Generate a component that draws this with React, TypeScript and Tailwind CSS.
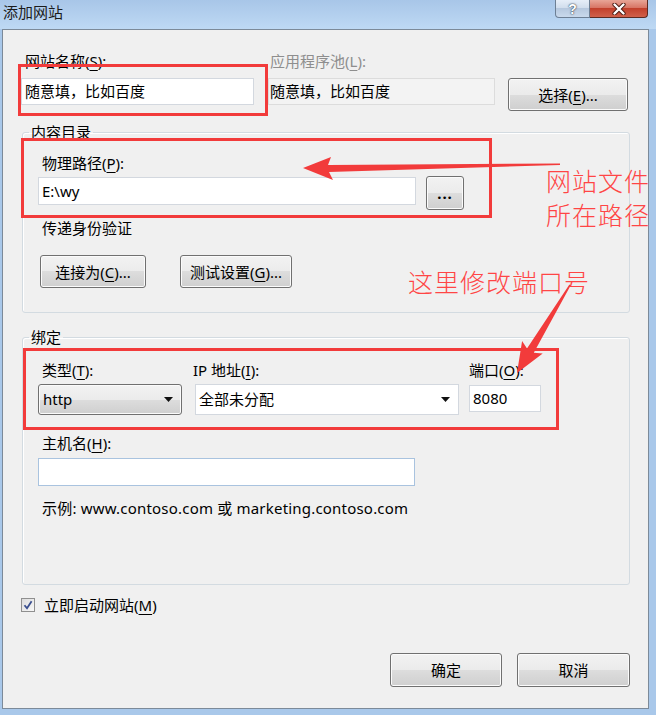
import React from 'react';

// win7 style push button
const btn =
  'flex items-center justify-center h-[33px] rounded-[3px] border border-[#707070] bg-[linear-gradient(to_bottom,#f2f2f2_0%,#ebebeb_50%,#dddddd_50%,#cfcfcf_100%)] shadow-[inset_0_0_0_1px_#fbfbfb] text-[15px] leading-[20px] text-black';

const field = 'h-[27px] border border-[#d3d8df] bg-white text-[15px] leading-[25px] pl-[3px] text-black';

const note =
  "absolute whitespace-nowrap font-light text-[25px] leading-[30px] tracking-[1px] text-[#ff4545] font-['Noto_Sans_CJK_SC',sans-serif]";

function Key({ c }: { c: string }) {
  return <span className="underline underline-offset-[3px] decoration-[1px]">{c}</span>;
}

function Label({ children, className = '' }: { children: React.ReactNode; className?: string }) {
  return <div className={`h-[20px] leading-[20px] text-[15px] whitespace-nowrap ${className}`}>{children}</div>;
}

function Caret() {
  return (
    <svg width="9" height="5" viewBox="0 0 9 5" className="shrink-0">
      <path d="M0 0 H9 L4.5 5 Z" fill="#111" />
    </svg>
  );
}

export default function App() {
  return (
    <div className="relative w-[656px] h-[715px] overflow-hidden bg-[#a9c8ea] font-['Noto_Sans','Noto_Sans_CJK_SC',sans-serif] text-black">
      {/* title bar */}
      <div className="h-[29px] flex items-start bg-[linear-gradient(to_bottom,#a8c6e8,#bed9f4)]">
        <div className="pl-[3px] pt-[2px] text-[15px] leading-[20px] text-[#1b1b1b]">添加网站</div>
        <div className="ml-auto mr-[8px] flex">
          <div className="w-[35px] h-[18px] flex items-center justify-center rounded-bl-[4px] border border-t-0 border-[#6d7f94] bg-[linear-gradient(to_bottom,#e6eef8_0%,#cfdcec_50%,#b6c8de_50%,#c9d9ec_100%)] text-white font-bold text-[14px] leading-[16px] font-['Liberation_Sans',sans-serif] [text-shadow:0_0_2px_#2c3a4a,0_0_1px_#2c3a4a]">
            ?
          </div>
          <div className="w-[58px] h-[18px] flex items-center justify-center rounded-br-[4px] border border-t-0 border-l-0 border-[#5c2a22] bg-[linear-gradient(to_bottom,#e8a597_0%,#d6705f_50%,#c2402c_50%,#d0604a_100%)]">
            <svg width="14" height="12" viewBox="0 0 14 12">
              <path d="M2.5 1.5 L11.5 10.5 M11.5 1.5 L2.5 10.5" stroke="#4a1a12" strokeWidth="4.2" strokeLinecap="round" />
              <path d="M2.5 1.5 L11.5 10.5 M11.5 1.5 L2.5 10.5" stroke="#fff" strokeWidth="2.4" strokeLinecap="round" />
            </svg>
          </div>
        </div>
      </div>

      {/* dialog body */}
      <div className="ml-[2px] w-[647px] h-[680px] border border-[#7c8a99] bg-[#f0f0f0]">
        {/* site name / app pool */}
        <div className="pt-[21px] pl-[18px] flex items-start">
          <div className="w-[233px]">
            <Label className="pl-[4px]">
              网站名称(<Key c="S" />):
            </Label>
            <div className={`${field} mt-[7px]`}>随意填，比如百度</div>
          </div>
          <div className="w-[227px] ml-[14px]">
            <Label className="pl-[2px] text-[#8e8e8e]">
              应用程序池(<Key c="L" />):
            </Label>
            <div className="mt-[7px] h-[27px] border border-[#dcdcdc] bg-[#f3f3f3] text-[15px] leading-[25px] pl-[1px]">
              随意填，比如百度
            </div>
          </div>
          <div className={`${btn} w-[120px] ml-[13px] mt-[27px]`}>
            选择(<Key c="E" />)...
          </div>
        </div>

        {/* content directory */}
        <fieldset className="mt-[11px] ml-[19px] w-[608px] rounded-[3px] border border-[#d3dbe1] shadow-[inset_1px_1px_0_#fff] pl-[15px] pt-[11px] pb-[24px]">
          <legend className="ml-[-9px] px-[2px] h-[20px] leading-[20px] text-[15px]">内容目录</legend>
          <Label className="pl-[4px]">
            物理路径(<Key c="P" />):
          </Label>
          <div className="mt-[3px] flex items-start">
            <div className={`${field} mt-[1px] w-[378px] h-[28px] leading-[26px]`}>E:\wy</div>
            <div className={`${btn} ml-[10px] w-[38px] h-[34px] text-[13px] font-bold tracking-[1px]`}>...</div>
          </div>
          <Label className="pl-[4px] mt-[8px]">传递身份验证</Label>
          <div className="mt-[17px] flex pl-[2px]">
            <div className={`${btn} w-[106px]`}>
              连接为(<Key c="C" />)...
            </div>
            <div className={`${btn} w-[112px] ml-[34px]`}>
              测试设置(<Key c="G" />)...
            </div>
          </div>
        </fieldset>

        {/* binding */}
        <fieldset className="mt-[14px] ml-[19px] w-[608px] rounded-[3px] border border-[#d3dbe1] shadow-[inset_1px_1px_0_#fff] pl-[15px] pt-[13px] pb-[66px]">
          <legend className="ml-[-9px] px-[2px] h-[20px] leading-[20px] text-[15px]">绑定</legend>
          <div className="flex items-start">
            <div className="w-[144px]">
              <Label className="pl-[4px]">
                类型(<Key c="T" />):
              </Label>
              <div className="mt-[4px] h-[31px] rounded-[3px] border border-[#707070] bg-[linear-gradient(to_bottom,#f2f2f2_0%,#ebebeb_50%,#dddddd_50%,#cfcfcf_100%)] shadow-[inset_0_0_0_1px_#fbfbfb] flex items-center pl-[4px] pr-[8px] text-[15px]">
                <span className="flex-1">http</span>
                <Caret />
              </div>
            </div>
            <div className="w-[264px] ml-[13px]">
              <Label className="ml-[-2px]">
                IP 地址(<Key c="I" />):
              </Label>
              <div className="mt-[4px] h-[31px] border border-[#d3d8df] bg-white flex items-center pl-[3px] pr-[8px] text-[15px]">
                <span className="flex-1">全部未分配</span>
                <Caret />
              </div>
            </div>
            <div className="w-[72px] ml-[10px]">
              <Label>
                端口(<Key c="O" />):
              </Label>
              <div className={`${field} mt-[5px]`}>8080</div>
            </div>
          </div>
          <Label className="pl-[4px] mt-[18px]">
            主机名(<Key c="H" />):
          </Label>
          <div className="mt-[5px] w-[377px] h-[28px] border border-[#a9c3df] bg-white" />
          <Label className="pl-[4px] mt-[12px] tracking-[0.2px]">示例: www.contoso.com 或 marketing.contoso.com</Label>
        </fieldset>

        {/* start now */}
        <div className="mt-[10px] pl-[18px] flex items-center h-[20px]">
          <div className="w-[14px] h-[14px] border border-[#8f8f8f] bg-[linear-gradient(to_bottom_right,#dcdcdc,#f8f8f8)] flex items-center justify-center">
            <svg width="10" height="10" viewBox="0 0 10 10">
              <path d="M1.5 5.2 L4 8.3 L8.6 1.2" fill="none" stroke="#3b4f8f" strokeWidth="1.8" />
            </svg>
          </div>
          <span className="ml-[9px] text-[15px] leading-[20px]">
            立即启动网站(<Key c="M" />)
          </span>
        </div>

        {/* dialog buttons */}
        <div className="mt-[38px] flex justify-end pr-[18px]">
          <div className={`${btn} w-[112px] h-[34px] border-[#3c7fb1] shadow-[inset_0_0_0_1px_#9fdcf8]`}>确定</div>
          <div className={`${btn} w-[113px] h-[34px] ml-[15px]`}>取消</div>
        </div>
      </div>

      {/* red annotations */}
      <div className="absolute left-[18px] top-[64px] w-[250px] h-[52px] border-[3px] border-[#f23b3b]" />
      <div className="absolute left-[21px] top-[138px] w-[471px] h-[80px] border-[3px] border-[#f23b3b]" />
      <div className="absolute left-[23px] top-[348px] w-[536px] h-[82px] border-[3px] border-[#f23b3b]" />

      <div className={`${note} left-[546px] top-[165px]`}>网站文件</div>
      <div className={`${note} left-[546px] top-[199px]`}>所在路径</div>
      <div className={`${note} left-[408px] top-[266px]`}>这里修改端口号</div>

      <svg className="absolute left-0 top-0 pointer-events-none" width="656" height="715" viewBox="0 0 656 715">
        <polygon points="303,168 331,157 328,165 560,163.5 560,165 329,172 333,180" fill="#f23b3b" />
        <polygon
          points="517,373 542.7,353.5 533.8,352.8 570.6,285.4 569.4,284.6 527,348.6 522.1,341.1"
          fill="#f23b3b"
        />
      </svg>
    </div>
  );
}
